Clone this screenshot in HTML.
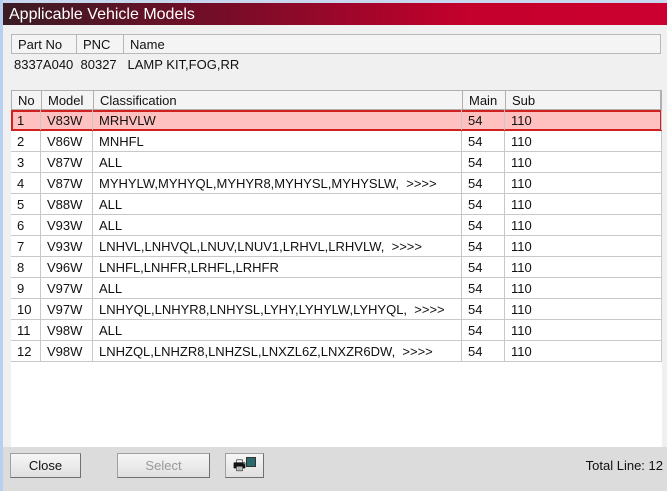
<!DOCTYPE html>
<html><head><style>
body{margin:0;width:667px;height:491px;overflow:hidden;background:#dcdcdc;font-family:"Liberation Sans",sans-serif;font-size:13px;color:#111;position:relative}
.edge{position:absolute;left:0;top:0;width:3px;height:491px;background:#b8d0f0}
.topedge{position:absolute;left:0;top:0;width:667px;height:3px;background:#c8d8ee}
.title{position:absolute;left:3px;top:3px;width:664px;height:22px;background:linear-gradient(90deg,#3a1c24 0%,#7a0c28 35%,#c4002c 70%,#cc0030 100%);color:#fff;font-size:16px;line-height:23px;padding-left:6px;box-sizing:border-box}
.panel{position:absolute;left:3px;top:25px;width:664px;height:422px;background:#f0f0f0}
.hdr{position:absolute;left:11px;top:34px;width:650px;height:20px;border:1px solid #b8b8b8;box-sizing:border-box;background:#f4f4f4}
.c{position:absolute;top:0;height:100%;border-right:1px solid #b8b8b8;box-sizing:border-box;padding-left:6px;line-height:19px;white-space:nowrap}
.info{position:absolute;top:56px;left:14px;line-height:18px}
.grid{position:absolute;left:11px;top:90px;width:651px;height:357px;background:#fff}
.row{position:absolute;left:0;width:651px;height:21px;border-bottom:1px solid #c8c8c8;box-sizing:border-box}
.row .c{line-height:22px;border-right:1px solid #c8c8c8}
.gh{height:20px;background:#f4f4f4;border:1px solid #b0b0b0;border-bottom:1px solid #b0b0b0}
.gh .c{line-height:19px;border-right:1px solid #b0b0b0}
.sel{background:#ffc0c0;outline:2px solid #d02020;outline-offset:-2px}
.btn{position:absolute;top:453px;height:25px;background:linear-gradient(#f6f6f6,#e0e0e0);border:1px solid #a0a0a0;border-right-color:#707070;border-bottom-color:#707070;box-sizing:border-box;text-align:center;line-height:23px}
</style></head><body>
<div class="topedge"></div><div class="edge"></div>
<div class="title">Applicable Vehicle Models</div>
<div class="panel"></div>
<div class="hdr">
<div class="c" style="left:0;width:65px">Part No</div>
<div class="c" style="left:65px;width:47px">PNC</div>
<div class="c" style="left:112px;width:536px;border-right:none">Name</div>
</div>
<div class="info">8337A040&nbsp;&nbsp;80327&nbsp;&nbsp;&nbsp;LAMP KIT,FOG,RR</div>
<div class="grid">
<div class="row gh" style="top:0">
<div class="c" style="left:0;width:30px">No</div><div class="c" style="left:30px;width:52px">Model</div><div class="c" style="left:82px;width:369px">Classification</div><div class="c" style="left:451px;width:43px">Main</div><div class="c" style="left:494px;width:155px">Sub</div></div>
</div>
<div class="btn" style="left:10px;width:71px">Close</div>
<div class="btn" style="left:117px;width:93px;color:#999">Select</div>
<div class="btn" style="left:225px;width:39px;font-size:14px;line-height:22px">🖶<span style="display:inline-block;width:8px;height:8px;background:#2a6a6a;border:1px solid #333;vertical-align:top;margin-top:3px"></span></div>
<div style="position:absolute;right:4px;top:458px">Total Line: 12</div>
<script>
var d=[["1","V83W","MRHVLW"],["2","V86W","MNHFL"],["3","V87W","ALL"],["4","V87W","MYHYLW,MYHYQL,MYHYR8,MYHYSL,MYHYSLW,&nbsp;&nbsp;&gt;&gt;&gt;&gt;"],["5","V88W","ALL"],["6","V93W","ALL"],["7","V93W","LNHVL,LNHVQL,LNUV,LNUV1,LRHVL,LRHVLW,&nbsp;&nbsp;&gt;&gt;&gt;&gt;"],["8","V96W","LNHFL,LNHFR,LRHFL,LRHFR"],["9","V97W","ALL"],["10","V97W","LNHYQL,LNHYR8,LNHYSL,LYHY,LYHYLW,LYHYQL,&nbsp;&nbsp;&gt;&gt;&gt;&gt;"],["11","V98W","ALL"],["12","V98W","LNHZQL,LNHZR8,LNHZSL,LNXZL6Z,LNXZR6DW,&nbsp;&nbsp;&gt;&gt;&gt;&gt;"]];
var h="";d.forEach(function(r,i){h+='<div class="row'+(i==0?' sel':'')+'" style="top:'+(20+i*21)+'px"><div class="c" style="left:0;width:30px">'+r[0]+'</div><div class="c" style="left:30px;width:52px">'+r[1]+'</div><div class="c" style="left:82px;width:369px">'+r[2]+'</div><div class="c" style="left:451px;width:43px">54</div><div class="c" style="left:494px;width:157px">110</div></div>';});
document.querySelector('.grid').insertAdjacentHTML('beforeend',h);
</script>
</body></html>
